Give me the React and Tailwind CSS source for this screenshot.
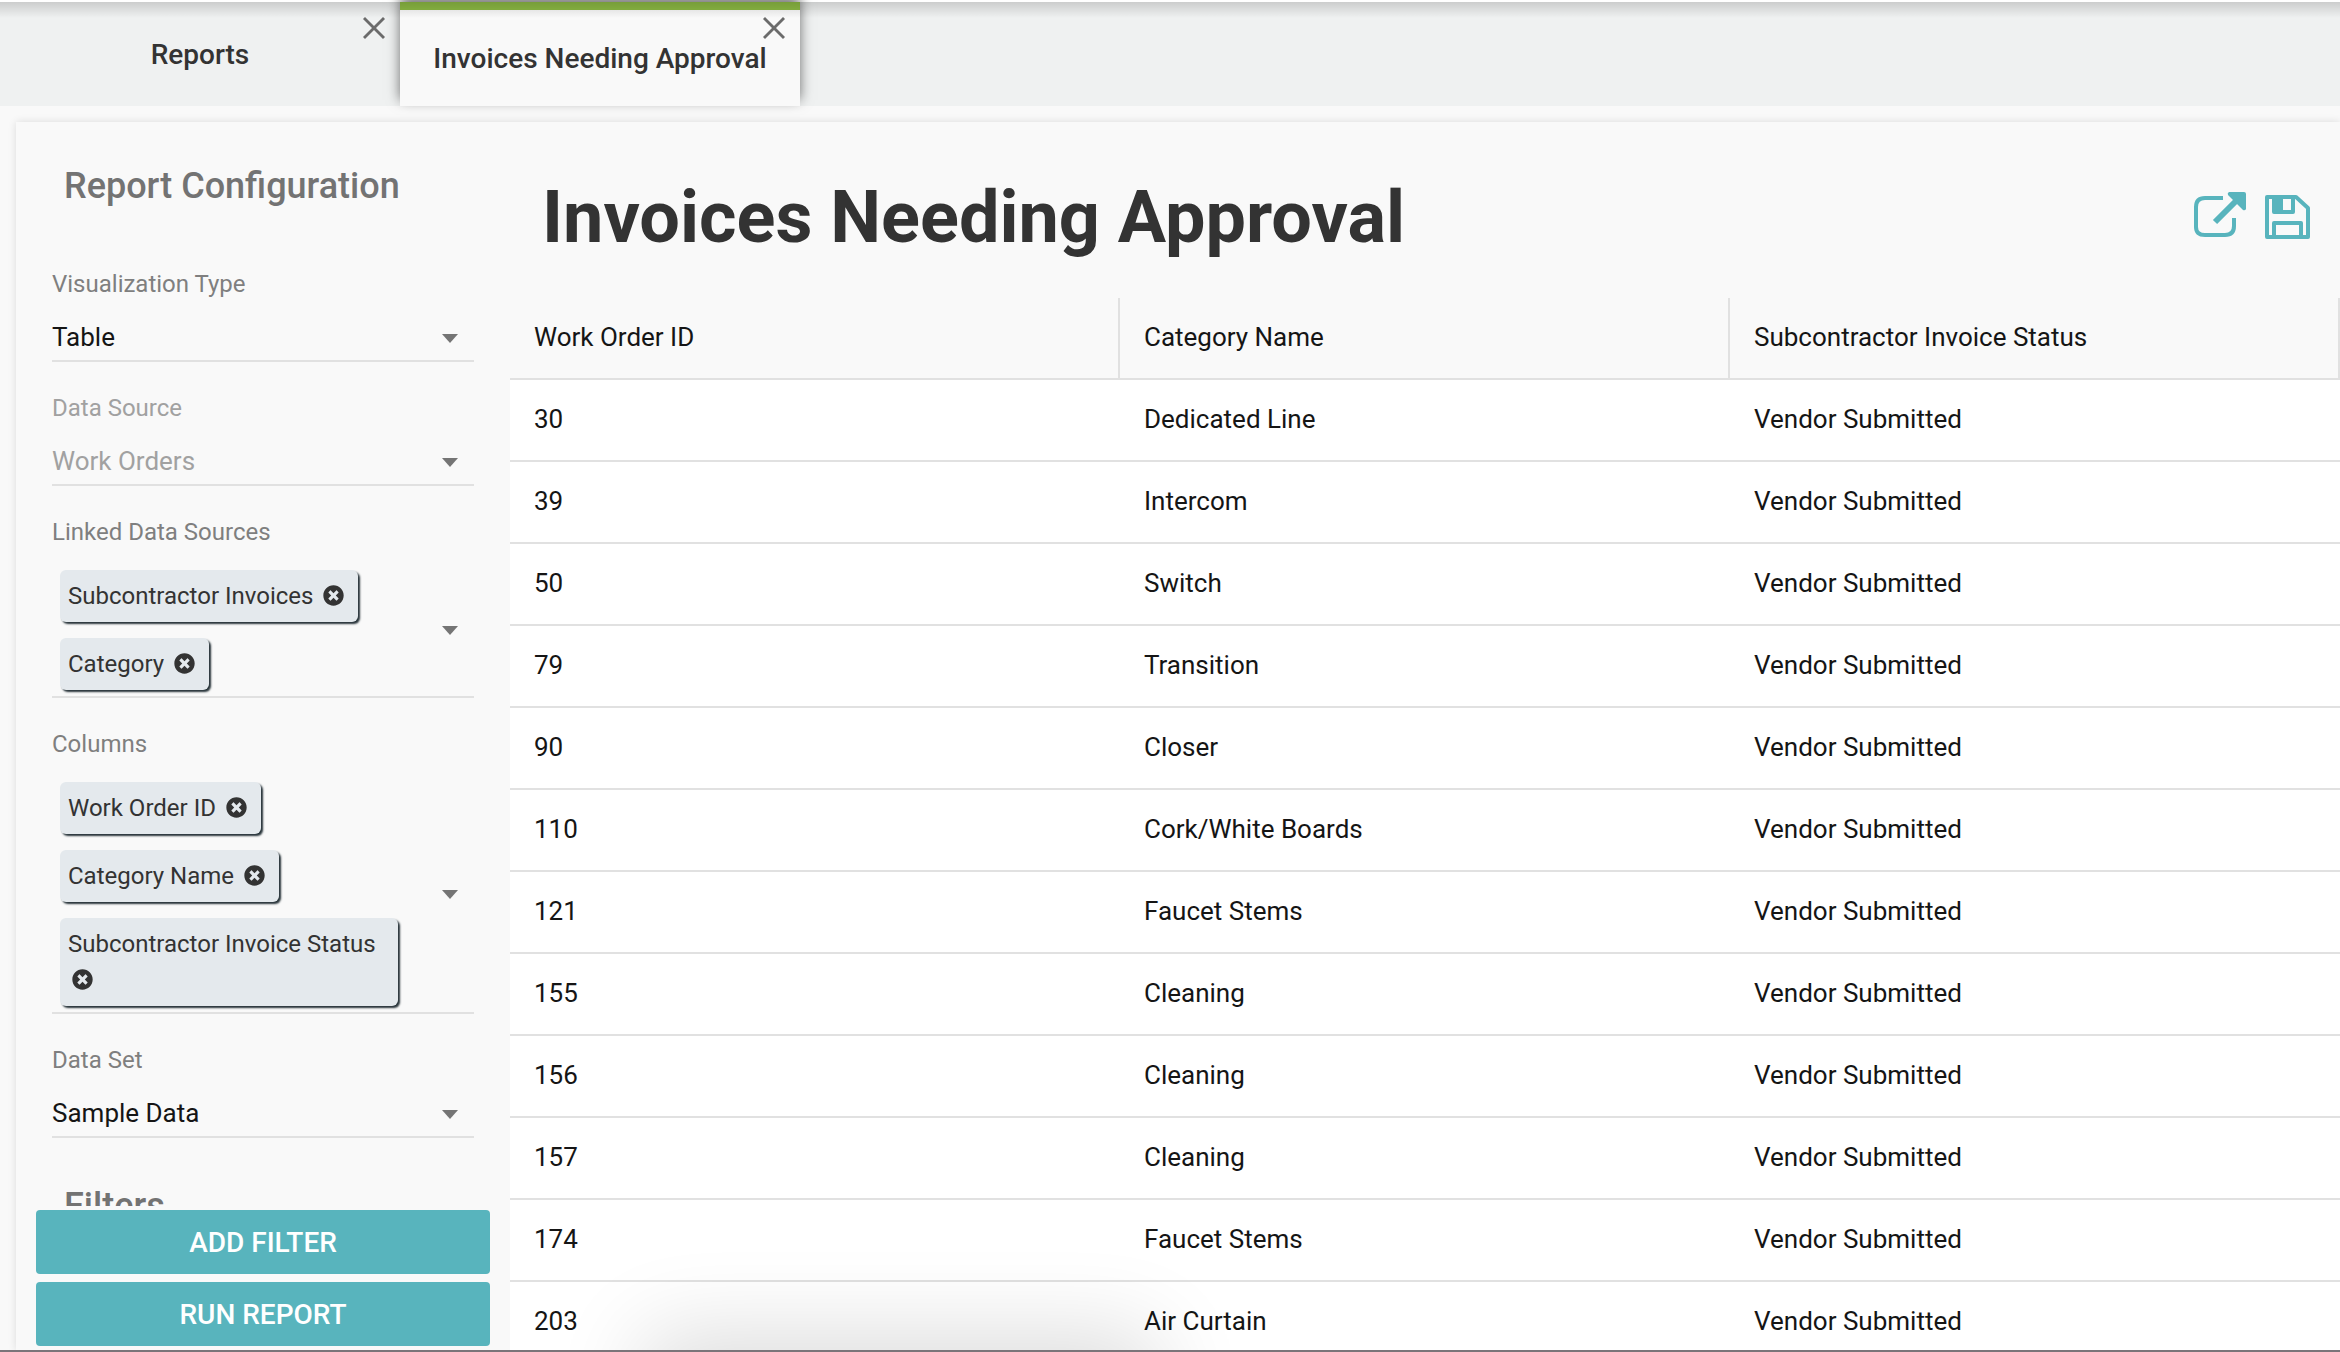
import { X } from "lucide-react";
import { FaTimesCircle } from "react-icons/fa";

const rows = [
  ["30", "Dedicated Line"],
  ["39", "Intercom"],
  ["50", "Switch"],
  ["79", "Transition"],
  ["90", "Closer"],
  ["110", "Cork/White Boards"],
  ["121", "Faucet Stems"],
  ["155", "Cleaning"],
  ["156", "Cleaning"],
  ["157", "Cleaning"],
  ["174", "Faucet Stems"],
  ["203", "Air Curtain"],
];

const columns = ["Work Order ID", "Category Name", "Subcontractor Invoice Status"];

function Caret() {
  return (
    <svg width="16" height="9" viewBox="0 0 16 9" fill="#757575">
      <path d="M0 0h16L8 9z" />
    </svg>
  );
}

function SelectField({ id, label, value, disabled }) {
  return (
    <div className="mb-8">
      <label
        htmlFor={id}
        className={`block text-2xl leading-7 ${disabled ? "text-[#a1a1a1]" : "text-[#7f7f7f]"}`}
      >
        {label}
      </label>
      <div className="relative mt-4">
        <select
          id={id}
          disabled={disabled}
          className={`block h-12 w-full appearance-none border-b-2 border-[#e1e1e1] bg-transparent text-[26px] opacity-100 ${disabled ? "text-[#a1a1a1]" : "text-[#151515]"}`}
        >
          <option>{value}</option>
        </select>
        <span className="pointer-events-none absolute inset-y-0 right-4 flex items-center">
          <Caret />
        </span>
      </div>
    </div>
  );
}

function ChipField({ label, items }) {
  return (
    <div className="mb-8" role="group" aria-label={label}>
      <div className="text-2xl leading-7 text-[#7f7f7f]">{label}</div>
      <div className="mt-6 flex items-center border-b-2 border-[#e1e1e1] pr-4 pb-[6px] pl-2">
        <div className="flex w-[338px] flex-col items-start gap-4">
          {items.map((item) => (
            <div
              key={item}
              className="rounded-md bg-[#e4e9ed] py-2 pr-[10px] pl-2 text-2xl leading-9 text-[#333] shadow-[2px_2px_2px_#263238]"
            >
              {item}{" "}
              <button aria-label={`Remove ${item}`} className="mx-1 mb-1 inline-block align-middle">
                <FaTimesCircle size={21} />
              </button>
            </div>
          ))}
        </div>
        <button aria-label={`Open ${label}`} className="ml-auto py-4">
          <Caret />
        </button>
      </div>
    </div>
  );
}

export default function App() {
  return (
    <div className="flex h-screen flex-col overflow-hidden border-b-2 border-[#7a7479] bg-[#f9f9f9] font-['Roboto',sans-serif]">
      {/* Tabs */}
      <header className="relative flex h-[106px] shrink-0 border-t-2 border-white bg-[#eff1f1] text-[28px] font-medium text-[#333]">
        <div className="relative flex w-[400px] items-center justify-center pt-0.5">
          <a href="#reports">Reports</a>
          <button aria-label="Close Reports" className="absolute top-1.5 right-1.5 text-[#6b6b6b]">
            <X size={40} strokeWidth={1.75} strokeLinecap="butt" />
          </button>
        </div>
        <div className="relative flex w-[400px] items-center justify-center border-t-8 border-[#8cb943] bg-[#f9f9f9] pt-0.5 shadow-[0_-6px_12px_rgba(0,0,0,0.55)]">
          <a href="#invoices">Invoices Needing Approval</a>
          <button
            aria-label="Close Invoices Needing Approval"
            className="absolute -top-0.5 right-1.5 text-[#6b6b6b]"
          >
            <X size={40} strokeWidth={1.75} strokeLinecap="butt" />
          </button>
        </div>
        {/* shadow cast by the bar above */}
        <div className="pointer-events-none absolute inset-x-0 top-0 h-4 bg-linear-to-b from-black/15 to-transparent" />
      </header>

      <main className="mt-4 ml-4 flex min-h-0 flex-1 bg-[#f9f9f9] shadow-[0_0_8px_rgba(0,0,0,0.12)]">
        {/* Report configuration */}
        <aside className="flex w-[494px] shrink-0 flex-col px-5 pb-1">
          <div className="min-h-0 flex-1 overflow-hidden px-4 pt-[42px]">
            <h2 className="mb-[62px] pl-3 text-4xl leading-[44px] font-medium text-[#737373]">
              Report Configuration
            </h2>
            <SelectField id="visualization" label="Visualization Type" value="Table" />
            <SelectField id="source" label="Data Source" value="Work Orders" disabled />
            <ChipField label="Linked Data Sources" items={["Subcontractor Invoices", "Category"]} />
            <ChipField label="Columns" items={columns} />
            <SelectField id="dataset" label="Data Set" value="Sample Data" />
            <h2 className="mt-[46px] pl-3 text-4xl leading-[44px] font-medium text-[#737373]">Filters</h2>
          </div>
          <div className="mt-1 flex flex-col gap-2">
            <button className="h-16 rounded-sm bg-[#58b4bd] pt-0.5 text-[28px] font-medium text-white">
              ADD FILTER
            </button>
            <button className="h-16 rounded-sm bg-[#58b4bd] pt-0.5 text-[28px] font-medium text-white">
              RUN REPORT
            </button>
          </div>
        </aside>

        {/* Report */}
        <section className="relative min-w-0 flex-1 overflow-hidden">
          <div className="flex items-center justify-between pt-12 pr-[30px] pb-8 pl-8">
            <h1 className="text-7xl leading-[96px] font-bold text-[#333]">Invoices Needing Approval</h1>
            <div className="flex gap-[18px] pb-1.5 text-[#58b4bd]">
              <button aria-label="Open report">
                <svg width="54" height="50" viewBox="0 0 54 50" fill="none">
                  <path d="M30 8H12Q3 8 3 17v20Q3 45 12 45h20q9 0 9-9V28" stroke="currentColor" strokeWidth="4" />
                  <path d="M22 32L44 10" stroke="currentColor" strokeWidth="6" />
                  <path d="M36 2H51Q53 2 53 4V19Q52 21 50 20L35 5Q34 3 36 2z" fill="currentColor" />
                </svg>
              </button>
              <button aria-label="Save report">
                <svg width="45" height="50" viewBox="0 0 45 50" fill="none" stroke="currentColor" strokeWidth="4">
                  <path d="M2 7h29l12 11v29H2z" strokeLinejoin="round" />
                  <path d="M9 8v14h19V8" strokeLinejoin="round" />
                  <path d="M9 46V33h27v13" strokeLinejoin="round" />
                  <path d="M10 8h8v13h-8z" fill="currentColor" stroke="none" />
                </svg>
              </button>
            </div>
          </div>
          <table className="w-full table-fixed border-separate border-spacing-0 text-left text-[26px] text-[#151515]">
            <thead>
              <tr>
                {columns.map((column) => (
                  <th key={column} className="h-[82px] border-r-2 border-b-2 border-[#e1e1e1] px-6 pb-0.5 font-normal">
                    {column}
                  </th>
                ))}
              </tr>
            </thead>
            <tbody className="bg-white">
              {rows.map(([id, category]) => (
                <tr key={id}>
                  <td className="h-[82px] border-b-2 border-[#e1e1e1] px-6 pb-0.5">{id}</td>
                  <td className="h-[82px] border-b-2 border-[#e1e1e1] px-6 pb-0.5">{category}</td>
                  <td className="h-[82px] border-b-2 border-[#e1e1e1] px-6 pb-0.5">Vendor Submitted</td>
                </tr>
              ))}
            </tbody>
          </table>
          {/* shadow rising from the bottom edge */}
          <div className="pointer-events-none absolute top-full left-[150px] h-40 w-[480px] shadow-[0_0_90px_16px_rgba(0,0,0,0.14)]" />
        </section>
      </main>
    </div>
  );
}
